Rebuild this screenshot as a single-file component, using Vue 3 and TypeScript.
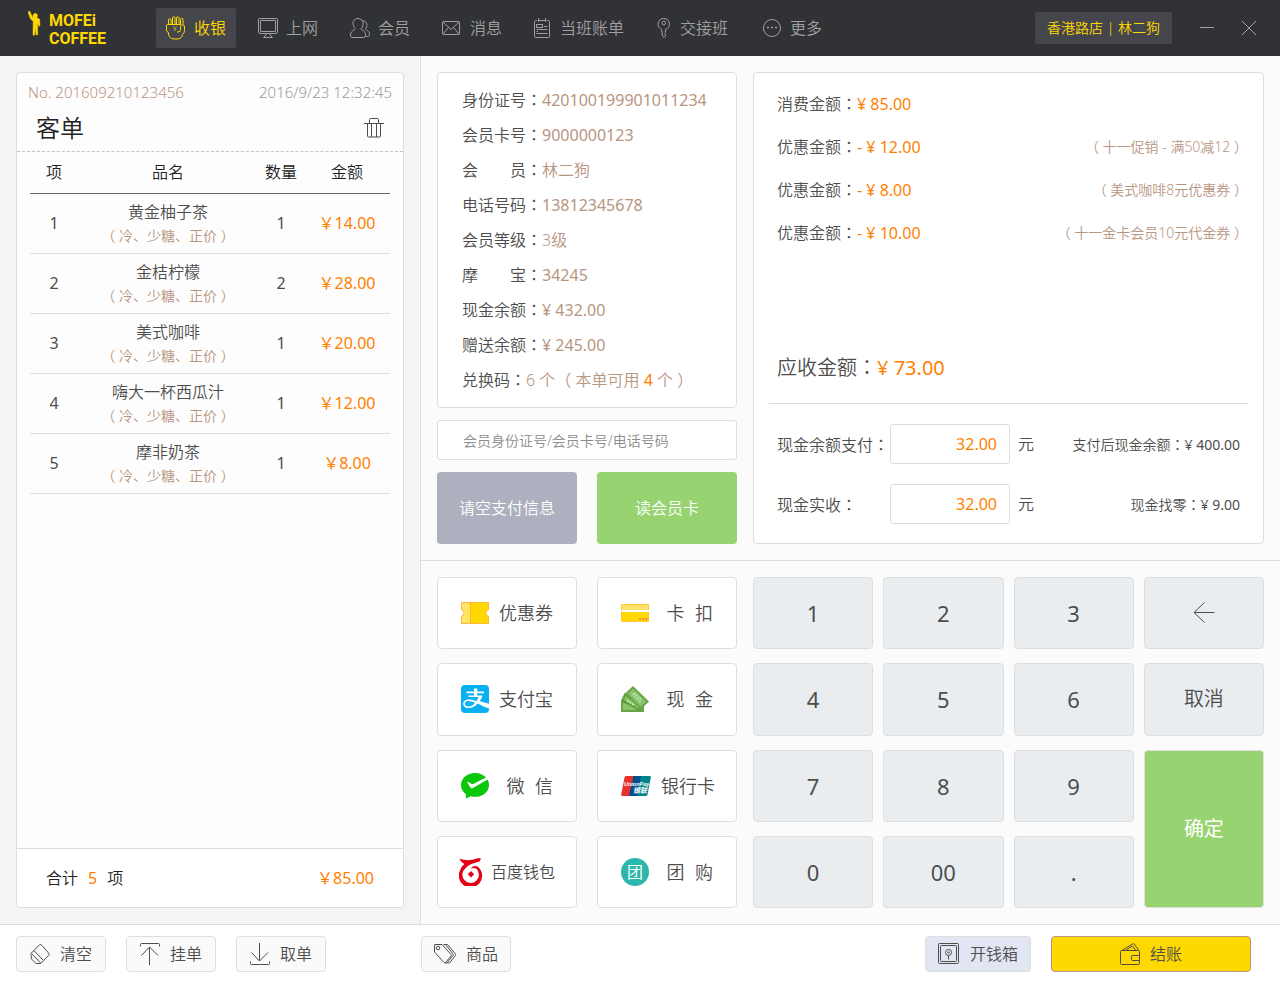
<script setup lang="ts">
import { h, ref, type FunctionalComponent } from 'vue'

interface Icon { w: number; h: number; body: string }
interface NavItem { label: string; icon: Icon }
interface OrderLine { name: string; spec: string; qty: number; amount: string }
interface MemberRow { label: string; value: string; text?: boolean }
interface PayMethod { label: string; icon: Icon; small?: boolean; tight?: boolean }

// Full-width colons and brackets are set centred in their cell.
const Txt: FunctionalComponent<{ t: string }> = (props) =>
  props.t.split(/([：（）])/).map((s) => (/[：（）]/.test(s) ? h('span', { class: 'mid-punct' }, s) : s))
Txt.props = ['t']

const nav: NavItem[] = [
  { label: '收银', icon: { w: 20, h: 26, body: '<path d="M2.500 9.500V5a1.250 1.250 0 0 1 2.500 0v4.500M6.500 9.500V3a1.250 1.250 0 0 1 2.500 0v6.500M10.500 9.500V3a1.250 1.250 0 0 1 2.500 0v6.500M14.500 9.500V4.500a1.250 1.250 0 0 1 2.500 0v5M14.500 9.500h-13a1 1 0 0 0-1 1v4.500q0 2 2 2.500v1.500a5.500 5.500 0 0 0 5.500 5h3a5.500 5.500 0 0 0 5.500-4.500q2-1.500 2-4v-3.500a2 2 0 0 0-4-.5v3a2.500 2.500 0 0 1-2.500 2.500h-1"/><path d="M7 11l2 2 2-2M9 13v3M7.500 13.500h3M7.500 15h3" opacity=".6" stroke-width=".7"/>' } },
  { label: '上网', icon: { w: 20, h: 20, body: '<rect x=".5" y=".5" width="19" height="15" rx="1.500"/><rect x="2.500" y="2.500" width="15" height="11" rx=".5"/><path d="M8 15.500v1.500l-2.500 2.500h9L12 17v-1.500"/>' } },
  { label: '会员', icon: { w: 20, h: 20, body: '<path d="M4.500 9.500C1.500 6 3 .500 8 .500S14.500 6 11.800 9.500c-1 1.200-1 1.700.2 2.300 2.300 1.100 3.500 2.700 3.500 5.200 0 1.800-.8 2.500-2 2.500h-11c-1.200 0-2-.7-2-2.500 0-2.500 1.500-4.100 3.800-5.200 1.200-.6 1.200-1.100.2-2.300z"/><path d="M12.500 2.500c4 .3 5.800 4.500 3.500 7.500-.8 1-.7 1.400.2 1.900 2 1 3.300 2.200 3.300 4.300 0 1.500-.7 2.300-1.800 2.300h-2"/>' } },
  { label: '消息', icon: { w: 20, h: 16, body: '<rect x=".5" y="1.500" width="17" height="13" rx="1"/><path d="M1 2l8 7.500L17 2M1 14l5.500-6.500M17 14l-5.500-6.500"/>' } },
  { label: '当班账单', icon: { w: 18, h: 20, body: '<path d="M3 2.500H1.500a1 1 0 0 0-1 1v15a1 1 0 0 0 1 1h13a1 1 0 0 0 1-1v-15a1 1 0 0 0-1-1H13M5 2.500h6M4.500 0v4M11.500 0v4M2.500 11.500h11M2.500 15.500h11M10 8.500h3.500M2.500 13.500h1.500"/><rect x="2.500" y="6.500" width="6" height="3"/>' } },
  { label: '交接班', icon: { w: 16, h: 20, body: '<path d="M5.500 11.200C3.500 10.500 2 8.500 2 6.200a5.500 5.500 0 0 1 11.500 0c0 2.300-1.500 4.300-3.500 5l-.5.300v3l-1 1 1 1.200v1.500l-1.500 1.300-1.500-1.300z"/><circle cx="7.750" cy="5" r="1.800"/>' } },
  { label: '更多', icon: { w: 22, h: 20, body: '<circle cx="12" cy="10" r="8.500"/><path d="M7 9.500h2M11 9.500h2M15 9.500h2" stroke-width="1.500"/>' } },
]

const order: OrderLine[] = [
  { name: '黄金柚子茶', spec: '（ 冷、少糖、正价 ）', qty: 1, amount: '14.00' },
  { name: '金桔柠檬', spec: '（ 冷、少糖、正价 ）', qty: 2, amount: '28.00' },
  { name: '美式咖啡', spec: '（ 冷、少糖、正价 ）', qty: 1, amount: '20.00' },
  { name: '嗨大一杯西瓜汁', spec: '（ 冷、少糖、正价 ）', qty: 1, amount: '12.00' },
  { name: '摩非奶茶', spec: '（ 冷、少糖、正价 ）', qty: 1, amount: '8.00' },
]

const member: MemberRow[] = [
  { label: '身份证号：', value: '420100199901011234' },
  { label: '会员卡号：', value: '9000000123' },
  { label: '会　　员：', value: '林二狗', text: true },
  { label: '电话号码：', value: '13812345678' },
  { label: '会员等级：', value: '3级', text: true },
  { label: '摩　　宝：', value: '34245' },
  { label: '现金余额：', value: '¥ 432.00' },
  { label: '赠送余额：', value: '¥ 245.00' },
]

const charges = [
  { label: '消费金额：', value: '¥ 85.00', note: '' },
  { label: '优惠金额：', value: '- ¥ 12.00', note: '（ 十一促销 - 满50减12 ）' },
  { label: '优惠金额：', value: '- ¥ 8.00', note: '（ 美式咖啡8元优惠券 ）' },
  { label: '优惠金额：', value: '- ¥ 10.00', note: '（ 十一金卡会员10元代金券 ）' },
]

const methods: PayMethod[] = [
  { label: '优惠券', icon: { w: 28, h: 22, body: '<path d="M0 0h28v8a3 3 0 0 0 0 6v8H0v-8a3 3 0 0 0 0-6z" fill="#ffd800"/><path d="M0 0h9v22H0v-8a3 3 0 0 0 0-6z" fill="#ffe566"/><path d="M.5.5h27v7.200a3.400 3.400 0 0 0 0 6.600v7.200H.5v-7.200a3.400 3.400 0 0 0 0-6.600z" fill="none" stroke="#ffb83d"/><path d="M9.500 1v20" stroke="#ffa83d" stroke-dasharray="2 1"/>' } },
  { label: '卡\u2004\u2005扣', icon: { w: 28, h: 18, body: '<rect width="28" height="18" rx="1" fill="#ffd800"/><path d="M0 1a1 1 0 0 1 1-1h26a1 1 0 0 1 1 1v5H0z" fill="#ffe16b"/><rect x=".5" y=".5" width="27" height="17" rx="1" fill="none" stroke="#ffc62e"/><path d="M0 6h28v2H0z" fill="#fff"/><path d="M18 14h2v2h-2zM21 14h2v2h-2zM24 14h2v2h-2z" fill="#ff8a3d"/>' } },
  { label: '支付宝', icon: { w: 28, h: 28, body: '<rect width="28" height="28" rx="4" fill="#0ab0f2"/><path d="M13 3.500h3.200v3H23v1.700h-6.800v2.200h5.300c-.5 2-1.500 4-2.800 5.700 3 1.200 6.200 2.100 9.300 2.700v4.600c-3.900-1.300-8-3.200-11.500-5C14 21.300 11 23 7.800 23 4 23 2.200 21 2.200 18.700c0-2.600 2.200-4.300 5.300-4.300 2.900 0 5.500.7 8 1.600.8-1 1.400-2.300 1.900-3.900H7.500v-1.500H13V8.200H5.500V6.500H13zM7.300 15.900c-2.400 0-3.500 1.200-3.500 2.800 0 1.700 1.600 2.800 3.900 2.800 2.500 0 4.600-1.500 6.300-3.500-2.300-1.200-4.600-2.100-6.700-2.100z" fill="#fff"/>' } },
  { label: '现\u2004\u2005金', icon: { w: 28, h: 26, body: '<path d="M0 14l23 4v8H0z" fill="#68a646"/><path d="M2 17l18 3v4H2z" fill="#86c46c"/><path d="M3.500 7L23 20l-3.500 5.500L0 15z" fill="#5f9e3e"/><path d="M4.500 10L20 20.500l-1.500 2.500L3 14z" fill="#86c46c"/><path d="M12 0l16 15.500-8.500 8L4 7.500z" fill="#68a646"/><path d="M12 2.800l13.200 12.700-5.700 5.300L6.800 7.600z" fill="#86c46c"/><path d="M11.500 8l8 8M13.500 7l7 7" stroke="#d4edc4" stroke-width="1.300" stroke-dasharray="1.500 1"/><path d="M6 14.500l7 4.500" stroke="#d4edc4" stroke-width="1.500" stroke-dasharray="2 1"/>' } },
  { label: '微\u2004\u2005信', icon: { w: 28, h: 26, body: '<path d="M14 0C6.200 0 0 5.200 0 12c0 3.700 1.800 6.800 4.800 9L5 25.500l4.500-2.300c1.400.4 3 .6 4.500.6 7.800 0 14-5.200 14-11.900 0-2-.5-3.700-1.400-5.300L11.500 15.300c-.8.4-1.500.2-1.900-.5L6.300 9.500c-.3-.7.3-1 .9-.6l3.400 2.100c.6.3 1 .3 1.600.1L25 4.500C22.500 1.800 18.500 0 14 0z" fill="#0bc70b"/>' } },
  { label: '银行卡', tight: true, icon: { w: 30, h: 20, body: '<path d="M5 0h9l-4 20H1.500Q0 20 .2 18.500L3.500 1.500Q3.800 0 5 0z" fill="#e5322d"/><path d="M12.500 0h9l-4 20H8z" fill="#00508e"/><path d="M20 0h8.500q1.600 0 1.300 1.500l-3.300 17q-.3 1.500-2 1.500H16z" fill="#008289"/><text x="3" y="10" font-family="Liberation Sans, sans-serif" font-size="5.500" font-weight="700" font-style="italic" fill="#fff">UnionPay</text><text x="12" y="17" font-family="Noto Sans CJK SC, sans-serif" font-size="7" font-weight="700" font-style="italic" fill="#fff">银联</text>' } },
  { label: '百度钱包', small: true, icon: { w: 24, h: 28, body: '<path d="M.5.500C6 3 13 2.500 17 .8c2-.8 3.500-.5 5-.3L20.500 3.500Q16 4.500 12.500 6 8.500 7.500 6.500 10.200A8.300 8.300 0 1 0 17.500 10.800C15.500 9.500 13.500 9.800 12 11c1-3 4.500-3.800 7.500-1.800A11.700 11.700 0 1 1 1.500 11.500C2.200 9 3.500 7.500 5.500 6 3 5 1.500 3 .5.500z" fill="#e60014"/><path d="M12 13l3.200 3.200L12 19.400l-3.200-3.200z" fill="#e60014"/>' } },
  { label: '团\u2004\u2005购', icon: { w: 28, h: 28, body: '<circle cx="14" cy="14" r="14" fill="#2bb8aa"/><text x="14" y="20" text-anchor="middle" font-family="Noto Sans CJK SC, sans-serif" font-size="16" font-weight="400" fill="#fff">团</text>' } },
]

const keys = ['1', '2', '3', 'back', '4', '5', '6', '取消', '7', '8', '9', '确定', '0', '00', '.']

const leftActions: NavItem[] = [
  { label: '清空', icon: { w: 20, h: 20, body: '<path d="M9.500.800L1.300 9.200q-1.200 1.300 0 2.600v3L6 19.500h3q1.200.5 2.200-.5l7.600-7.700q1-1 0-2L12 1.500Q10.700-.3 9.500.800zM4 6.700l9.500 9.800M1.300 9.300l9.200 9.500"/>' } },
  { label: '挂单', icon: { w: 20, h: 22, body: '<path d="M.500 3.500v-2a1 1 0 0 1 1-1h17a1 1 0 0 1 1 1v2M9.500 22V4M1.500 12.500l8-8.500 8.500 8.500"/>' } },
  { label: '取单', icon: { w: 20, h: 22, body: '<path d="M.500 18.500v2a1 1 0 0 0 1 1h17a1 1 0 0 0 1-1v-2M9.500 0v18M1.500 9.500l8 8.500 8.500-8.500"/>' } },
]
const goods: Icon = { w: 22, h: 20, body: '<path d="M.500 1v7l9.500 10.500q.8.700 1.500 0l5.500-6.500q.7-.8 0-1.500L8 .500H1q-.5 0-.5.500zM9.500.500h2L19 10q.5.700 0 1.500L13 19h-2M11.500.500h2L21.500 10q.5.700 0 1.500L15.500 19h-2"/><circle cx="4" cy="4" r="1.800"/>' }
const safe: Icon = { w: 22, h: 22, body: '<rect x=".5" y=".5" width="20" height="20" rx="1"/><rect x="2.500" y="2.500" width="16" height="16" rx="1"/><circle cx="10.500" cy="9.500" r="3"/><circle cx="10.500" cy="9.500" r=".7"/><path d="M10.500 12.500v4"/>' }
const wallet: Icon = { w: 20, h: 22, body: '<path d="M18.500 7.500h-17a1 1 0 0 0-1 1v12a1 1 0 0 0 1 1h17a1 1 0 0 0 1-1v-12a1 1 0 0 0-1-1zM19.500 12.500h-7a1 1 0 0 0-1 1v3a1 1 0 0 0 1 1h7M2.500 7L13 .800q.7-.4 1.200.2L18.500 7M6 7l6.500-4L15.500 7"/>' }

const memberKey = ref('')
const balancePay = ref('32.00')
const cashPay = ref('32.00')
</script>

<template>
  <div class="pos">
    <header class="topbar">
      <div class="logo">
        <svg width="16" height="26" viewBox="0 0 16 26" aria-hidden="true">
          <path d="M0 1l1.500-1 3 6 1.500.5a2.200 2.200 0 1 1 2.500 0l3 1.500.5 6-1 1.500-1.200-3-.3 2 .3 9-1.600.5-.9-8-.5 8-1.600.3-.2-1 .2-13L2.500 8z" fill="#ffd800" stroke="#ffd800" stroke-width=".5" />
        </svg>
        <div class="logo-name"><span>MOFEi</span><span>COFFEE</span></div>
      </div>
      <nav class="nav">
        <button v-for="(n, i) in nav" :key="n.label" type="button" class="nav-item" :class="{ active: i === 0 }">
          <svg class="line" :width="n.icon.w" :height="n.icon.h" :viewBox="`0 0 ${n.icon.w} ${n.icon.h}`" v-html="n.icon.body" />
          <span>{{ n.label }}</span>
        </button>
      </nav>
      <button type="button" class="store">香港路店 | 林二狗</button>
      <button type="button" class="win" aria-label="最小化">
        <svg class="line" width="14" height="14" viewBox="0 0 14 14"><path d="M0 6.500h14" /></svg>
      </button>
      <button type="button" class="win" aria-label="关闭">
        <svg class="line" width="16" height="16" viewBox="0 0 16 16"><path d="M1 1l14 14M15 1L1 15" /></svg>
      </button>
    </header>

    <main class="body">
      <aside class="side">
        <section class="card order">
          <div class="order-head">
            <div class="order-meta"><span class="brown">No. 201609210123456</span><time>2016/9/23 12:32:45</time></div>
            <div class="order-title">
              <h1>客单</h1>
              <button type="button" class="bare" aria-label="删除">
                <svg class="line" width="20" height="20" viewBox="0 0 20 20"><path d="M0 5.500h20M5.500 5.500V1.500a1 1 0 0 1 1-1h7a1 1 0 0 1 1 1v4M3.500 5.500v12.500a1 1 0 0 0 1 1h11a1 1 0 0 0 1-1V5.500M7.500 5.500v13.500M12.500 5.500v13.500" /></svg>
              </button>
            </div>
          </div>
          <table class="lines">
            <colgroup><col class="c-no" /><col /><col class="c-qty" /><col class="c-amt" /></colgroup>
            <thead><tr><th>项</th><th>品名</th><th>数量</th><th>金额</th></tr></thead>
            <tbody>
              <tr v-for="(o, i) in order" :key="o.name">
                <td class="num">{{ i + 1 }}</td>
                <td><div class="item">{{ o.name }}</div><div class="spec"><Txt :t="o.spec" /></div></td>
                <td class="num">{{ o.qty }}</td>
                <td class="orange">￥{{ o.amount }}</td>
              </tr>
            </tbody>
          </table>
          <footer class="order-foot">
            <span class="count">合计<b class="orange">5</b>项</span>
            <span class="orange">￥85.00</span>
          </footer>
        </section>
      </aside>

      <div class="work">
        <div class="upper">
          <div class="member-col">
            <section class="card member">
              <div v-for="m in member" :key="m.label" class="row">
                <Txt :t="m.label" /><span class="brown" :class="{ num: !m.text }">{{ m.value }}</span>
              </div>
              <div class="row">
                <Txt t="兑换码：" /><span class="brown">6 个<Txt t="（ 本单可用 " /><span class="orange">4</span><Txt t=" 个 ）" /></span>
              </div>
            </section>
            <input v-model="memberKey" class="field search" type="text" aria-label="会员身份证号/会员卡号/电话号码" placeholder="会员身份证号/会员卡号/电话号码" />
            <div class="pair">
              <button type="button" class="big gray">请空支付信息</button>
              <button type="button" class="big green">读会员卡</button>
            </div>
          </div>

          <section class="card bill">
            <div v-for="(c, i) in charges" :key="i" class="charge">
              <span><Txt :t="c.label" /><span class="orange">{{ c.value }}</span></span>
              <span v-if="c.note" class="note"><Txt :t="c.note" /></span>
            </div>
            <div class="due"><Txt t="应收金额：" /><span class="orange">¥ 73.00</span></div>
            <div class="pay-row">
              <label for="balance-pay"><Txt t="现金余额支付：" /></label>
              <input id="balance-pay" v-model="balancePay" class="field amount" type="text" />
              <span class="unit">元</span>
              <span class="after"><Txt t="支付后现金余额：" /><span class="num">¥ 400.00</span></span>
            </div>
            <div class="pay-row">
              <label for="cash-pay"><Txt t="现金实收：" /></label>
              <input id="cash-pay" v-model="cashPay" class="field amount" type="text" />
              <span class="unit">元</span>
              <span class="after"><Txt t="现金找零：" /><span class="num">¥ 9.00</span></span>
            </div>
          </section>
        </div>

        <div class="lower">
          <div class="methods">
            <button v-for="m in methods" :key="m.label" type="button" class="method" :class="{ small: m.small, tight: m.tight }">
              <svg :width="m.icon.w" :height="m.icon.h" :viewBox="`0 0 ${m.icon.w} ${m.icon.h}`" aria-hidden="true" v-html="m.icon.body" />
              <span>{{ m.label }}</span>
            </button>
          </div>
          <div class="keypad">
            <button v-for="k in keys" :key="k" type="button" class="key" :class="{ word: k === '取消', ok: k === '确定' }" :aria-label="k === 'back' ? '退格' : k">
              <svg v-if="k === 'back'" class="line" width="22" height="22" viewBox="0 0 22 22"><path d="M21.500 10.500H1M11.500 .5l-10.500 10 10.500 10" /></svg>
              <template v-else>{{ k }}</template>
            </button>
          </div>
        </div>
      </div>
    </main>

    <footer class="bottombar">
      <div class="group">
        <button v-for="a in leftActions" :key="a.label" type="button" class="tool">
          <svg class="line" :width="a.icon.w" :height="a.icon.h" :viewBox="`0 0 ${a.icon.w} ${a.icon.h}`" v-html="a.icon.body" />
          <span>{{ a.label }}</span>
        </button>
      </div>
      <button type="button" class="tool">
        <svg class="line" width="22" height="20" viewBox="0 0 22 20" v-html="goods.body" /><span>商品</span>
      </button>
      <div class="group end">
        <button type="button" class="tool drawer">
          <svg class="line" width="22" height="22" viewBox="0 0 22 22" v-html="safe.body" /><span>开钱箱</span>
        </button>
        <button type="button" class="tool checkout">
          <svg class="line" width="20" height="22" viewBox="0 0 20 22" v-html="wallet.body" /><span>结账</span>
        </button>
      </div>
    </footer>
  </div>
</template>

<style>
body { margin: 0; }
.mid-punct { font-family: "Noto Sans CJK TC", sans-serif; }
</style>

<style scoped>
.pos {
  --line: #dedede;
  display: flex;
  flex-direction: column;
  min-height: 100vh;
  background: #fff;
  color: #4d4d4d;
  font: 350 16px/20px "Noto Sans", "Noto Sans CJK SC", sans-serif;
}
.pos *, .pos *::before { box-sizing: border-box; }
button, input { margin: 0; padding: 0; border: 0; background: none; color: inherit; font: inherit; }
button { display: flex; align-items: center; justify-content: center; cursor: pointer; white-space: nowrap; }
svg { flex: none; display: block; }
.line { fill: none; stroke: currentColor; stroke-width: 1; }
.brown { color: #b8957f; }
.orange { color: #ff7f00; font-weight: 400; }
.num { font-weight: 400; }

.topbar { display: flex; align-items: center; height: 56px; padding: 0 16px 0 28px; background: #313236; color: #a0a0a0; }
.logo { display: flex; width: 128px; gap: 5px; }
.logo svg { margin-top: 3px; }
.logo-name { display: flex; flex-direction: column; padding-top: 4px; color: #ffd800; font: 700 16px/18px Roboto, sans-serif; }
.nav { display: flex; gap: 12px; flex: 1; }
.nav-item { height: 40px; padding: 0 10px; gap: 8px; border-radius: 2px; }
.nav-item.active { background: #45464b; color: #ffd800; }
.store { height: 32px; padding: 0 12px; margin-right: 20px; border-radius: 2px; background: #45464b; color: #ffd800; font-size: 14px; }
.win { width: 30px; height: 30px; }
.win + .win { margin-left: 12px; }

.body { flex: 1; display: grid; grid-template-columns: 420px 1fr; }
.side { display: flex; padding: 16px; background: #f4f4f4; }
.card { border: 1px solid var(--line); border-radius: 4px; background: #fff; }
.order { flex: 1; display: flex; flex-direction: column; background: #fdfdfd; }
.order-head { height: 79px; padding: 9px 11px 0; border-bottom: 1px dashed #c4c4c4; }
.order-meta { display: flex; justify-content: space-between; font-size: 15px; color: #999; }
.order-title { display: flex; align-items: center; justify-content: space-between; padding: 8px 8px 0; }
.order-title h1 { margin: 0; font: inherit; font-size: 24px; line-height: 36px; color: #222; }
.lines { margin: 0 13px; border-collapse: collapse; table-layout: fixed; text-align: center; }
.c-no { width: 48px; }
.c-qty { width: 46px; }
.c-amt { width: 86px; }
.lines th { height: 41px; padding: 0; font-weight: inherit; white-space: nowrap; color: #222; border-bottom: 1px solid #666; }
.lines td { height: 60px; padding: 0; border-bottom: 1px solid var(--line); }
.item { line-height: 24px; }
.spec { font-size: 14px; line-height: 22px; color: #b8957f; }
.order-foot { display: flex; align-items: center; justify-content: space-between; height: 59px; margin-top: auto; padding: 0 29px; border-top: 1px solid var(--line); border-radius: 0 0 4px 4px; background: #fff; color: #222; }
.count b { margin: 0 10px; }

.work { display: flex; flex-direction: column; border-left: 1px solid var(--line); background: #fbfbfb; }
.upper, .lower { display: grid; grid-template-columns: 300px 1fr; gap: 16px; padding: 16px; }
.lower { flex: 1; border-top: 1px solid var(--line); }
.member-col { display: flex; flex-direction: column; gap: 12px; }
.member { padding: 9px 24px 10px; }
.row { height: 35px; line-height: 35px; white-space: nowrap; }
.field { border: 1px solid var(--line); border-radius: 3px; background: #fff; height: 40px; outline: none; }
.search { padding: 0 25px; font-size: 14px; }
.search::placeholder { color: #8c8c8c; opacity: 1; }
.pair { display: grid; grid-template-columns: 1fr 1fr; gap: 20px; }
.big { height: 72px; border-radius: 4px; color: #fff; }
.gray { background: #adb0be; }
.green { background: #98d371; }

.bill { display: flex; flex-direction: column; padding: 9px 15px 19px; }
.charge { display: flex; justify-content: space-between; height: 43px; padding: 0 0 0 8px; line-height: 43px; }
.note { font-size: 14px; color: #b8957f; }
.due { height: 71px; margin-top: auto; padding: 0 8px; border-bottom: 1px solid var(--line); font-size: 20px; line-height: 68px; }
.pay-row { display: flex; align-items: center; margin-top: 20px; padding: 0 8px; }
.pay-row label { width: 113px; white-space: nowrap; }
.amount { width: 120px; padding: 0 12px; text-align: right; color: #ff7f00; font-weight: 400; }
.unit { margin-left: 8px; }
.after { margin-left: auto; font-size: 14px; }

.methods { display: grid; grid-template-columns: 1fr 1fr; grid-template-rows: repeat(4, 1fr); gap: 14px 20px; }
.method { justify-content: space-between; padding: 0 23px; border: 1px solid var(--line); border-radius: 4px; background: #fff; font-size: 18px; }
.method.small { padding: 0 21px; font-size: 16px; }
.method.tight { padding-right: 21px; }
.keypad { display: grid; grid-template-columns: repeat(4, 1fr); grid-template-rows: repeat(4, 1fr); gap: 14px 10px; }
.key { min-height: 72px; border: 1px solid var(--line); border-radius: 4px; background: #e9edf0; font-size: 22px; font-weight: 400; }
.key.word { font-size: 20px; font-weight: 350; }
.key.ok { grid-row: 3 / span 2; grid-column: 4; background: #98d371; color: #fff; font-size: 20px; }

.bottombar { display: grid; grid-template-columns: 405px auto 1fr; align-items: center; padding: 11px 29px 12px 16px; border-top: 1px solid var(--line); }
.group { display: flex; gap: 20px; }
.end { justify-content: flex-end; }
.tool { height: 36px; min-width: 90px; padding: 0 12px; gap: 10px; border: 1px solid var(--line); border-radius: 4px; background: #fafafa; }
.drawer { background: #e2e6f2; }
.checkout { width: 200px; border-color: #b8957f; background: #ffd800; }
</style>
